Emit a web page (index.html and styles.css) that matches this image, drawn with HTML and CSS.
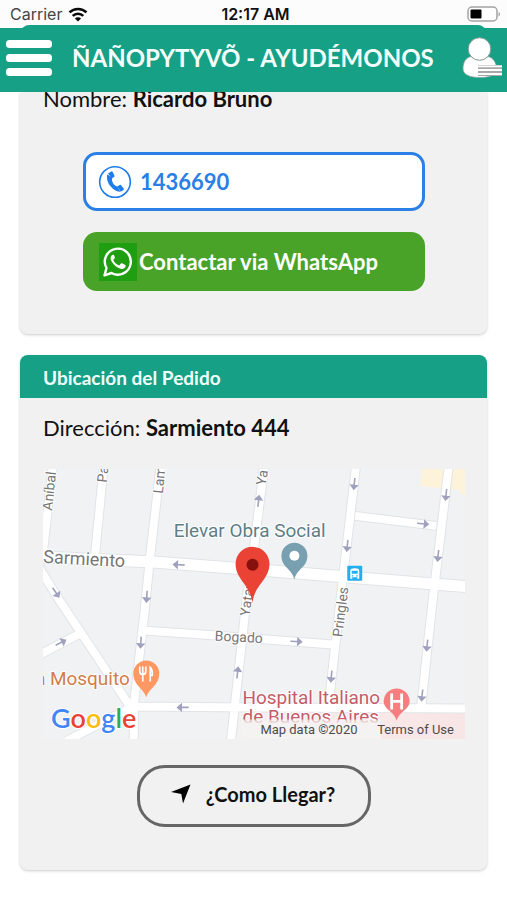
FILE: index.html
```
<!DOCTYPE html>
<html lang="es">
<head>
<meta charset="utf-8">
<meta name="viewport" content="width=device-width, initial-scale=1">
<title>Ñañopytyvõ - Ayudémonos</title>
<link rel="stylesheet" href="styles.css">
</head>
<body>
<div class="status">
  <div class="status-left">
    <span class="carrier">Carrier</span>
    <svg class="wifi" viewBox="0 0 20 15" aria-hidden="true">
      <path d="M1.500 5.400a12.200 12.200 0 0 1 17 0" fill="none" stroke="#0a0a0a" stroke-width="2.600"/>
      <path d="M4.700 8.800a7.600 7.600 0 0 1 10.600 0" fill="none" stroke="#0a0a0a" stroke-width="2.500"/>
      <path d="M10 14.600L6.900 11.500a4.400 4.400 0 0 1 6.200 0z" fill="#0a0a0a"/>
    </svg>
  </div>
  <span class="clock">12:17 AM</span>
  <svg class="battery" viewBox="0 0 34 16" aria-hidden="true">
    <rect x="1" y="1" width="29" height="14" rx="4" fill="#fff" stroke="#a3a3a3" stroke-width="1.500"/>
    <rect x="3.500" y="3.500" width="11" height="9" rx="1" fill="#000"/>
    <path d="M31.500 6v4.500q1.500-.8 1.500-2.200t-1.500-2.300z" fill="#a3a3a3"/>
  </svg>
</div>
<header class="appbar">
  <button class="icon-button" type="button" aria-label="Menú">
    <svg class="menu-icon" viewBox="0 0 46 38" aria-hidden="true">
      <g fill="#fff"><rect x="0" y="1" width="46" height="8" rx="3.500"/><rect x="0" y="15" width="46" height="8" rx="3.500"/><rect x="0" y="29" width="46" height="8" rx="3.500"/></g>
    </svg>
  </button>
  <h1 class="app-title">ÑAÑOPYTYVÕ - AYUDÉMONOS</h1>
  <button class="icon-button" type="button" aria-label="Perfil">
    <svg class="user-icon" viewBox="0 0 40 42" aria-hidden="true">
      <path d="M1 32c0-7 3-11.500 8-12.500 5 4 12 4 17 0 5 1 8.500 6 8.500 12.500 0 6-7 8.500-16.500 8.500S1 38 1 32z" fill="#fff" stroke="#86a39b" stroke-width=".8"/>
      <circle cx="17.500" cy="12" r="11.300" fill="#fff" stroke="#7d9a92" stroke-width="1"/>
      <g fill="#fff"><path d="M16 28h24v11H16z" fill="#a8a8a8"/><path d="M16 28.500h24v1.800H16zM16 32h24v2H16zM16 36h24v2H16z"/></g>
    </svg>
  </button>
</header>
<main class="page">
  <section class="card card-contact">
    <div class="card-body">
      <p class="field">Nombre: <strong>Ricardo Bruno</strong></p>
      <div class="actions">
        <a class="action action-phone" href="tel:1436690">
          <svg class="phone-icon" viewBox="0 0 34 34" aria-hidden="true">
            <circle cx="17" cy="17" r="15.300" fill="#fff" stroke="#1f7cee" stroke-width="1.600"/>
            <path d="M9.400 9.200c-1.300 3.800.2 8.600 3.400 12.400 2.900 3.500 6.400 5.500 9.600 5.100l-3.200-5.400c-1.400.3-3-1.300-4.100-3-1.100-1.800-1.500-3.900-.8-5.200z" fill="#1f7cee"/>
            <path d="M10.100 8.200l3.300-1.800q.9-.3 1.300.5l1.800 3.800q.3.900-.5 1.400l-2.500 1.300zM19.200 21.500l2.500-1.600q.8-.4 1.400.3l2.600 3.300q.5.900-.2 1.400l-2.700 1.800z" fill="#1f7cee"/>
          </svg>
          <span>1436690</span>
        </a>
        <a class="action action-whatsapp" href="https://wa.me/1436690">
          <svg class="whatsapp-icon" viewBox="0 0 38 38" aria-hidden="true">
            <rect width="38" height="38" fill="#1e9e10"/>
            <path d="M5.500 32.300l2-7.300a13 13 0 1 1 5 5z" fill="none" stroke="#fff" stroke-width="2.400" stroke-linejoin="round"/>
            <path d="M14.800 11.800c-.5-.3-1.500-.2-2 .4-1.500 1.600-1.600 3.700-.4 5.900 2 3.800 5.400 6.800 9.800 7.900 2 .4 4.100-.9 4.500-2.900.1-.6 0-1-.4-1.200l-3.300-1.600c-.4-.2-.8-.1-1.100.3l-1.200 1.500c-.3.400-.7.300-1.100.1-2.400-1.100-4-2.600-5.100-4.700-.2-.4-.1-.7.200-1l1-1.300c.2-.3.2-.6.100-.9z" fill="#fff"/>
          </svg>
          <span>Contactar via WhatsApp</span>
        </a>
      </div>
    </div>
  </section>

  <section class="card">
    <h2 class="card-title">Ubicación del Pedido</h2>
    <div class="card-body card-body-location">
      <p class="field">Dirección: <strong>Sarmiento 444</strong></p>
      <svg class="map" viewBox="43 469 423 271" role="img" aria-label="Mapa de Sarmiento 444">
        <defs>
          <g id="arrow"><path d="M-6 0H4M1.500-3L5 0L1.500 3z" fill="#a0a1bf" stroke="#a0a1bf" stroke-width="1.600"/></g>
          <linearGradient id="clinic" x1="0" x2="1"><stop offset="0" stop-color="#f4f1f1"/><stop offset=".6" stop-color="#f8e8e7"/><stop offset="1" stop-color="#f8e6e6"/></linearGradient>
          <linearGradient id="fade" x1="0" y1="0" x2="0" y2="1"><stop offset="0" stop-color="#f5f2f2" stop-opacity=".6"/><stop offset=".3" stop-color="#f5f2f2"/><stop offset="1" stop-color="#f5f2f2"/></linearGradient>
          <g id="roads" fill="none">
            <path d="M53 464L42 560M104 464L95 557M356 516L437 526M145 631L217 636L333 645M36 657L80 634M66 742L131 708"/>
            <path d="M161 464L150 560L145 610L134 706V745M265 464L253 560L247 600L231 745M357 464L342 593L329 708M450 464L433 606L422 708M38 566L59 600L131 708M131 707L260 708L470 709"/>
          </g>
        </defs>
        <rect x="43" y="469" width="423" height="271" fill="#f0f2f4"/>
        <path d="M423 469H466V497L459 490L421 486z" fill="#fcf3da"/>
        <path d="M235 712H466V740H235z" fill="url(#clinic)"/>
        <use href="#roads" stroke="#e1e4e7" stroke-width="10"/>
        <path d="M38 557L150 562L270 571L470 587" fill="none" stroke="#e1e4e7" stroke-width="13"/>
        <use href="#roads" stroke="#fff" stroke-width="8"/>
        <path d="M38 557L150 562L270 571L470 587" fill="none" stroke="#fff" stroke-width="11"/>
        <use href="#arrow" transform="translate(179 565) rotate(183)"/>
        <use href="#arrow" transform="translate(147 597) rotate(94)"/>
        <use href="#arrow" transform="translate(56 593) rotate(56)"/>
        <use href="#arrow" transform="translate(61 643) rotate(-27)"/>
        <use href="#arrow" transform="translate(141 643) rotate(94)"/>
        <use href="#arrow" transform="translate(183 708) rotate(180)"/>
        <use href="#arrow" transform="translate(238 673) rotate(-84)"/>
        <use href="#arrow" transform="translate(259 501) rotate(-84)"/>
        <use href="#arrow" transform="translate(355 484) rotate(96)"/>
        <use href="#arrow" transform="translate(348 546) rotate(96)"/>
        <use href="#arrow" transform="translate(447 495) rotate(96)"/>
        <use href="#arrow" transform="translate(439 556) rotate(96)"/>
        <use href="#arrow" transform="translate(424 524) rotate(6)"/>
        <use href="#arrow" transform="translate(297 642) rotate(3)"/>
        <use href="#arrow" transform="translate(332 677) rotate(96)"/>
        <use href="#arrow" transform="translate(428 646) rotate(96)"/>
        <use href="#arrow" transform="translate(423 696) rotate(96)"/>
        <g class="street street-small">
          <text transform="translate(52 511) rotate(-84)">Aníbal</text>
          <text transform="translate(107 483) rotate(-84)">Pa</text>
          <text transform="translate(163 494) rotate(-84)">Lam</text>
          <text transform="translate(266 486) rotate(-80)">Ya</text>
          <text transform="translate(250 617) rotate(-82)">Yatay</text>
          <text transform="translate(343 638) rotate(-83)">Pringles</text>
          <text transform="translate(215 641) rotate(3)">Bogado</text>
        </g>
        <text class="street" transform="translate(43 563) rotate(3)">Sarmiento</text>
        <text class="place place-org" x="174" y="537">Elevar Obra Social</text>
        <text class="place place-food" x="35" y="686">n</text>
        <text class="place place-food" x="50" y="686">Mosquito</text>
        <g class="place place-clinic"><text x="243" y="724">de Buenos Aires</text><text x="243" y="705">Hospital Italiano</text></g>
        <path d="M242 720H382V740H242z" fill="url(#fade)"/>
        <path d="M295 580C293 569 282 568 282 556A13 13 0 0 1 308 556C308 568 297 569 295 580z" fill="#78a0b0"/>
        <circle cx="295" cy="556" r="5" fill="#fff"/>
        <path d="M253 603C251 585 236 580 236 564A17 17 0 0 1 270 564C270 580 255 585 253 603z" fill="#ea4335"/>
        <circle cx="253" cy="565" r="6" fill="#85100c"/>
        <path d="M146.500 698C144 689 133.500 686 133.500 674A13 13 0 0 1 159.500 674C159.500 686 149 689 146.500 698z" fill="#ff9862"/>
        <path d="M140 667v5q0 3 3 3v7M143 667v8M146 667v5q0 3-3 3M150.500 682V668q2.500 2 2 8h-2" fill="none" stroke="#fff" stroke-width="1.700"/>
        <path d="M397.500 721C395 712 384.500 710 384.500 702A13 13 0 0 1 410.500 702C410.500 710 400 712 397.500 721z" fill="#f77d7f"/>
        <path d="M392.500 694v16M402.500 694v16M392.500 702h10" stroke="#fff" stroke-width="2.800"/>
        <rect x="348" y="566" width="15" height="15" rx="1" fill="#23aef0"/>
        <path d="M351 579v-8q0-2.500 4.500-2.500t4.500 2.500v8h-2v-1.500h-5v1.500z" fill="#fff"/>
        <path d="M352.500 571h6v3h-6zM352.500 575.500h1.500v1.200h-1.500zM357 575.500h1.500v1.200h-1.500z" fill="#23aef0"/>
        <text class="google" x="51" y="729"><tspan fill="#4285f4">G</tspan><tspan fill="#ea4335">o</tspan><tspan fill="#fbbc05">o</tspan><tspan fill="#4285f4">g</tspan><tspan fill="#34a853">l</tspan><tspan fill="#ea4335">e</tspan></text>
        <text class="credit" x="261" y="735">Map data ©2020</text>
        <text class="credit" x="378" y="735">Terms of Use</text>
      </svg>
      <button class="route" type="button">
        <svg class="route-icon" viewBox="0 0 20 20" aria-hidden="true"><path d="M19.500.5L12 19.500L10.300 10L0 8z" fill="#000"/></svg>
        <span>¿Como Llegar?</span>
      </button>
    </div>
  </section>
</main>
</body>
</html>
```
FILE: styles.css
```
* {
  box-sizing: border-box;
}

body {
  margin: 0;
  background: #fff;
  color: #111;
  font-family: Lato, "Liberation Sans", sans-serif;
}

svg {
  display: block;
  flex: none;
}

.status {
  display: grid;
  grid-template-columns: 1fr auto 1fr;
  align-items: center;
  height: 28px;
  padding: 0 6px 0 10px;
  background: #fcfcfc;
  font-family: Inter, "Liberation Sans", sans-serif;
  font-size: 16px;
}

.status-left {
  display: flex;
  align-items: center;
  gap: 6px;
}

.carrier {
  color: #444;
}

.wifi {
  width: 20px;
  height: 15px;
}

.clock {
  font-weight: 600;
}

.battery {
  justify-self: end;
  width: 34px;
  height: 16px;
}

.appbar {
  position: relative;
  display: flex;
  align-items: center;
  gap: 20px;
  height: 64px;
  padding: 0 5px 4px 6px;
  background: #16a085;
}

.appbar::before {
  content: "";
  position: absolute;
  inset: -3px 21px auto;
  height: 8px;
  border-radius: 8px 8px 0 0;
  background: #16a085;
}

.icon-button {
  position: relative;
  padding: 0;
  border: 0;
  background: none;
}

.menu-icon {
  width: 46px;
  height: 38px;
}

.user-icon {
  width: 40px;
  height: 42px;
}

.app-title {
  flex: 1;
  margin: 0;
  color: #f4fffd;
  font-size: 24px;
  font-weight: 700;
  line-height: 32px;
  white-space: nowrap;
}

.page {
  display: flex;
  flex-direction: column;
  gap: 21px;
  padding: 0 20px 28px;
}

.card {
  overflow: hidden;
  border-radius: 8px;
  background: #f1f1f1;
  box-shadow: 0 1px 3px rgba(0, 0, 0, 0.2);
}

.card-contact {
  border-radius: 0 0 8px 8px;
}

.card-title {
  margin: 0;
  padding: 2px 23px 0;
  background: #16a085;
  color: #effffb;
  font-size: 19px;
  font-weight: 700;
  line-height: 41px;
}

.card-body {
  padding: 0 22px 43px 23px;
}

.card-body-location {
  padding-top: 16px;
}

.field {
  margin: 0;
  font-size: 22px;
  line-height: 28px;
}

.field strong {
  font-weight: 700;
}

.card-contact .field {
  margin-top: -8px;
}

.actions {
  display: flex;
  flex-direction: column;
  gap: 21px;
  padding: 39px 40px 0;
}

.card-contact .card-body {
  padding-top: 1px;
}

.action {
  display: flex;
  align-items: center;
  height: 59px;
  border-radius: 14px;
  font-size: 22px;
  font-weight: 700;
  text-decoration: none;
  white-space: nowrap;
}

.action-phone {
  gap: 8px;
  padding: 0 12px;
  border: 3px solid #2a80e6;
  background: #fff;
  color: #2a80e6;
}

.action-whatsapp {
  gap: 2px;
  padding: 0 16px;
  background: #4aa329;
  color: #fff;
}

.phone-icon {
  width: 34px;
  height: 34px;
}

.whatsapp-icon {
  width: 38px;
  height: 38px;
}

.map {
  width: 100%;
  margin: 27px 0 26px;
}

.street,
.place,
.google,
.credit {
  paint-order: stroke;
  stroke: #fff;
  stroke-width: 2px;
  stroke-linejoin: round;
  font-family: Roboto, "Liberation Sans", sans-serif;
}

.street {
  fill: #767676;
  font-size: 18px;
}

.street-small {
  font-size: 14px;
}

.place {
  font-size: 19px;
}

.place-org {
  fill: #607d86;
}

.place-food {
  fill: #d17c4a;
}

.place-clinic {
  fill: #c35c68;
}

.google {
  font-family: Lato, sans-serif;
  font-size: 27px;
  font-weight: 600;
}

.credit {
  fill: #4c4c4c;
  stroke: none;
  font-size: 13px;
}

.route {
  display: flex;
  align-items: center;
  justify-content: center;
  gap: 15px;
  width: 234px;
  height: 62px;
  margin: 0 auto;
  padding: 0 2px 4px 0;
  border: 3px solid #666;
  border-radius: 28px;
  background: transparent;
  color: #111;
  font-family: inherit;
  font-size: 20px;
  font-weight: 700;
}

.route-icon {
  width: 20px;
  height: 20px;
}
```
